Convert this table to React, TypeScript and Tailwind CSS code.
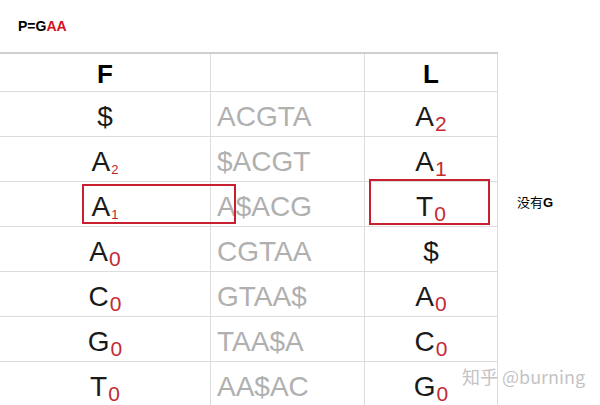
const rows = [
  { f: "$", fs: "", fsSmall: false, bwt: "ACGTA", l: "A", ls: "2" },
  { f: "A", fs: "2", fsSmall: true, bwt: "$ACGT", l: "A", ls: "1" },
  { f: "A", fs: "1", fsSmall: true, bwt: "A$ACG", l: "T", ls: "0" },
  { f: "A", fs: "0", fsSmall: false, bwt: "CGTAA", l: "$", ls: "" },
  { f: "C", fs: "0", fsSmall: false, bwt: "GTAA$", l: "A", ls: "0" },
  { f: "G", fs: "0", fsSmall: false, bwt: "TAA$A", l: "C", ls: "0" },
  { f: "T", fs: "0", fsSmall: false, bwt: "AA$AC", l: "G", ls: "0" },
];

const Glyph = ({ ch, sub, small }: { ch: string; sub: string; small?: boolean }) => (
  <span className="inline-flex items-baseline text-[28px] text-[#1a1a1a] leading-none pt-[6px]">
    {ch}
    {sub && (
      <span
        className={
          small
            ? "text-[13px] text-[#c0202a] relative top-[3px] ml-[1px]"
            : "text-[21px] text-[#c42a34] relative top-[5px] ml-[1px]"
        }
      >
        {sub}
      </span>
    )}
  </span>
);

export default function App() {
  return (
    <div className="w-[600px] h-[405px] bg-white overflow-hidden relative font-['Liberation_Sans',Arial,sans-serif]">
      <div className="h-[52px] pl-[18px] pt-[19px] text-[14px] font-bold text-black leading-none">
        P=G<span className="text-[#d0121b]">AA</span>
      </div>
      <div className="flex">
        <div className="relative w-[498px] border-t-2 border-[#cfcfcf]">
          <div className="grid grid-cols-[211px_154px_133px]">
            <div className="h-[38px] border-b border-r border-[#dcdcdc] flex items-center justify-center text-[26px] font-bold text-black pt-[3px]">
              F
            </div>
            <div className="h-[38px] border-b border-r border-[#dcdcdc]" />
            <div className="h-[38px] border-b border-r border-[#dcdcdc] flex items-center justify-center text-[26px] font-bold text-black pt-[3px]">
              L
            </div>
            {rows.map((r, i) => (
              <div key={i} className="contents">
                <div className="h-[45px] border-b border-r border-[#dcdcdc] flex items-center justify-center">
                  <Glyph ch={r.f} sub={r.fs} small={r.fsSmall} />
                </div>
                <div className="h-[45px] border-b border-r border-[#dcdcdc] flex items-center pl-[6px] pt-[6px] text-[28px] text-[#b0b0b0] leading-none">
                  {r.bwt}
                </div>
                <div className="h-[45px] border-b border-r border-[#dcdcdc] flex items-center justify-center">
                  <Glyph ch={r.l} sub={r.ls} />
                </div>
              </div>
            ))}
          </div>
          <div className="absolute left-[82px] top-[130px] w-[154px] h-[40px] border-2 border-[#c8202e]" />
          <div className="absolute left-[369px] top-[125px] w-[121px] h-[46px] border-2 border-[#c8202e]" />
        </div>
        <div className="pl-[19px] pt-[143px] text-[13px] text-black leading-none">
          <span className="font-['Noto_Sans_CJK_SC',serif]">没有</span>
          <span className="font-bold">G</span>
        </div>
      </div>
      <div className="absolute left-[462px] top-[367px] text-[18px] text-[#c4c4c4] leading-none font-['Noto_Sans_CJK_SC',sans-serif]">
        知乎 @burning
      </div>
    </div>
  );
}
